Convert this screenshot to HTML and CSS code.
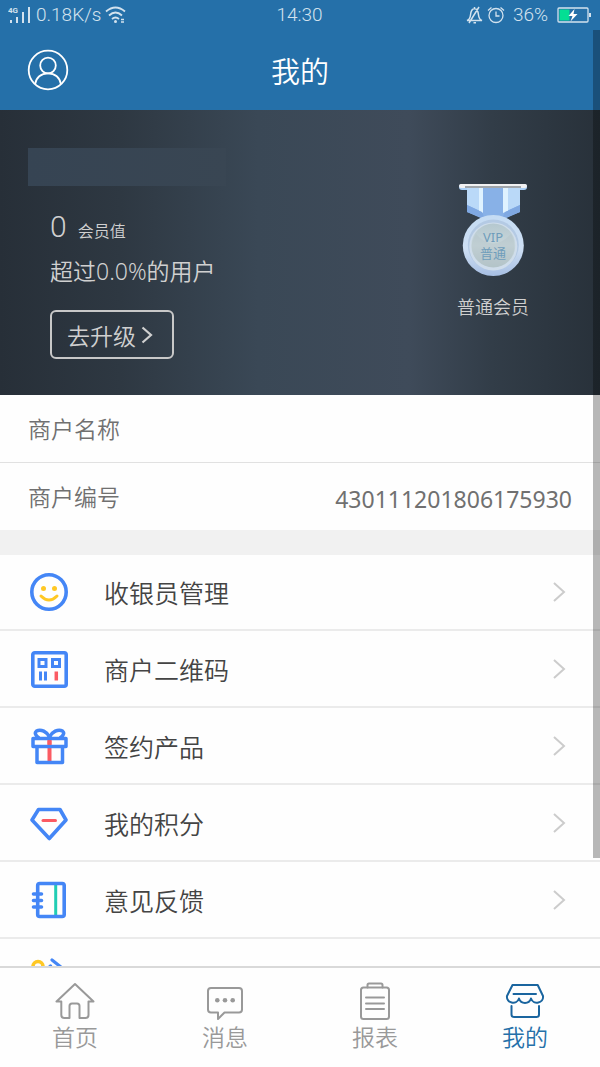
FILE: index.html
```html
<!DOCTYPE html>
<html lang="zh-CN">
<head>
<meta charset="utf-8">
<meta name="viewport" content="width=device-width, initial-scale=1">
<title>我的</title>
<link rel="stylesheet" href="styles.css">
</head>
<body>
<div class="app">
  <div class="status">
    <div class="status-side">
      <svg width="24" height="18" viewBox="0 0 24 18" fill="#d3e2ee"><text class="net" x="0" y="7">4G</text><path d="M2 14h2v3H2zM8 11h2v6H8zM14 6h2v11h-2zM20 1h2v16h-2z"/></svg>
      <span>0.18K/s</span>
      <svg width="22" height="18" viewBox="0 0 22 18" fill="none" stroke="#d3e2ee" stroke-width="1.8"><path d="M1 5.500q9.500-8 19 0M4 9.500q6.500-6 13 0M7 13q3.500-3 7 0"/><circle cx="10.500" cy="15.500" r="1.500" fill="#d3e2ee" stroke="none"/><path d="M16 13.500h3M16 16h3" stroke-width="1.500"/></svg>
    </div>
    <span>14:30</span>
    <div class="status-side status-right">
      <svg width="17" height="18" viewBox="0 0 17 18" fill="none" stroke="#d3e2ee" stroke-width="1.500"><path d="M1 14.500h15q-3-1-3.500-5.500-.5-6-4-6.500-3.500.5-4 6.500Q4 13.500 1 14.500zM8.500 2.500V1M7.500 16.800h2.500M13 1L3 17"/></svg>
      <svg width="18" height="18" viewBox="0 0 18 18" fill="none" stroke="#d3e2ee" stroke-width="1.300"><circle cx="9" cy="9.500" r="7"/><path d="M9 5.500V10h3.500M1 4.500L4.500 1.500M17 4.500L13.500 1.500"/></svg>
      <span class="percent">36%</span>
      <svg width="34" height="16" viewBox="0 0 34 16"><rect x="1" y="1" width="30" height="14" rx="1" fill="none" stroke="#d3e2ee" stroke-width="1.300"/><path d="M2.500 2.500h10v11h-10z" fill="#04df94"/><path d="M32 6h2v4h-2z" fill="#d3e2ee"/><path d="M17.500 2L11.500 9h4l-2 5.500 7-7.500h-4z" fill="#fff"/></svg>
    </div>
  </div>

  <header class="header">
    <button class="profile" type="button" aria-label="个人资料">
      <svg width="42" height="42" viewBox="0 0 42 42" fill="none" stroke="#fff" stroke-width="1.800"><circle cx="21" cy="21" r="19.300"/><circle cx="21" cy="16.500" r="7.800"/><path d="M8.200 35C9 28.500 14 24.300 21 24.300S33 28.500 33.800 35"/></svg>
    </button>
    <h1 class="title">我的</h1>
  </header>

  <main class="content">
    <section class="hero">
      <div class="member">
        <div class="name-mask"></div>
        <div class="stats">
          <p class="score"><span class="score-value">0</span><span class="score-label">会员值</span></p>
          <p class="rank">超过0.0%的用户</p>
          <button class="upgrade" type="button">去升级<svg width="12" height="20" viewBox="0 0 12 20" fill="none" stroke="#d0d0d0" stroke-width="2.200"><path d="M1.500 2.500L10 10 1.500 17.500"/></svg></button>
        </div>
      </div>
      <div class="level">
        <svg width="70" height="94" viewBox="0 0 70 94">
          <defs>
            <linearGradient id="rim" x1="0" y1="0" x2="0" y2="1"><stop offset="0" stop-color="#c5dcf4"/><stop offset=".55" stop-color="#cedff3"/><stop offset="1" stop-color="#a7bfe3"/></linearGradient>
            <linearGradient id="face" x1="0" y1="0" x2="0" y2="1"><stop offset="0" stop-color="#b5c8cf"/><stop offset=".5" stop-color="#c8d6da"/><stop offset="1" stop-color="#b3c4c8"/></linearGradient>
          </defs>
          <rect x="1" y="1" width="68" height="6" rx="3" fill="#abd1f8"/>
          <rect x="1" y="1" width="68" height="4" rx="2" fill="#f1f1f2"/>
          <path d="M7 3h56v2H7z" fill="#a0a5aa"/>
          <path d="M9 5h53v24L46 36H25L9 29z" fill="#88b1e7"/>
          <path d="M9 5h12v22.500L9 22zM62 5H50v22.500L62 22z" fill="#bad9f8"/>
          <path d="M21 5h4v25l-4-2zM45 5h5v23l-5 2z" fill="#dff2ff"/>
          <path d="M9 22l15 7 3 7L9 29zM62 22l-15 7-3 7 18-7z" fill="#7fa8e2"/>
          <circle cx="35.300" cy="62.500" r="30.500" fill="url(#rim)"/>
          <circle cx="35.300" cy="62" r="25.500" fill="#b4cae4"/>
          <circle cx="35.300" cy="63.500" r="24" fill="#cfddeb"/>
          <circle cx="35.300" cy="62.500" r="22" fill="url(#face)"/>
          <path d="M18 51Q35 70 53 51 61 65 51 77q-16 14-32 0Q9 65 18 51z" fill="#b4c4c8" opacity=".4"/>
          <text class="medal-text" x="35" y="59">VIP</text>
          <text class="medal-text" x="35" y="75">普通</text>
        </svg>
        <p class="level-name">普通会员</p>
      </div>
    </section>

    <dl class="info">
      <div class="info-row"><dt>商户名称</dt><dd></dd></div>
      <div class="info-row"><dt>商户编号</dt><dd>430111201806175930</dd></div>
    </dl>

    <nav class="menu">
      <a class="item" href="#cashier">
        <svg class="icon" viewBox="0 0 38 38" fill="none" stroke="#ffc824" stroke-width="3" stroke-linecap="round"><circle cx="19" cy="19" r="17.200" stroke="#4486f6" stroke-width="3.600"/><circle cx="13.500" cy="15.500" r="2.500" fill="#ffc824" stroke="none"/><circle cx="24.500" cy="15.500" r="2.500" fill="#ffc824" stroke="none"/><path d="M11 23q8 8 16 0"/></svg>
        <span class="label">收银员管理</span>
        <svg class="chevron" viewBox="0 0 14 22"><path d="M2 2l10 9L2 20"/></svg>
      </a>
      <a class="item" href="#qrcode">
        <svg class="icon" viewBox="0 0 38 38" fill="none" stroke="#4486f6" stroke-width="3"><rect x="2.800" y="2.800" width="33.400" height="33.400" rx="2" stroke-width="3.600"/><path d="M9 9.500h7v7H9zM22.500 9.500h7v7h-7zM10.500 21.500v9M15.500 21.500v9"/><path d="M26.300 21.500v9" stroke="#fb5b63" stroke-width="3.500"/></svg>
        <span class="label">商户二维码</span>
        <svg class="chevron" viewBox="0 0 14 22"><path d="M2 2l10 9L2 20"/></svg>
      </a>
      <a class="item" href="#products">
        <svg class="icon" viewBox="0 0 38 38" fill="none" stroke="#4486f6" stroke-width="3.500" stroke-linejoin="round"><path d="M19.500 13v22" stroke="#fb5b63" stroke-width="4"/><path d="M3 11.500h33v8H3zM7 19.500h25.500v16H7zM19.500 10C17 5 11 1.500 6.500 4 3.500 6.500 7 9.500 9 11M19.500 10C22 5 28 1.500 32.500 4 35.500 6.500 32 9.500 30 11"/><path d="M19.500 13.300v4.400" stroke="#fb5b63" stroke-width="4"/></svg>
        <span class="label">签约产品</span>
        <svg class="chevron" viewBox="0 0 14 22"><path d="M2 2l10 9L2 20"/></svg>
      </a>
      <a class="item" href="#points">
        <svg class="icon" viewBox="0 0 38 38" fill="none" stroke="#4486f6" stroke-width="3.600" stroke-linejoin="round" stroke-linecap="round"><path d="M8.500 5.500h21.500L36 16 19.300 34.500 2 16z"/><path d="M13 16.500h12.500" stroke="#fb5b63" stroke-width="3"/></svg>
        <span class="label">我的积分</span>
        <svg class="chevron" viewBox="0 0 14 22"><path d="M2 2l10 9L2 20"/></svg>
      </a>
      <a class="item" href="#feedback">
        <svg class="icon" viewBox="0 0 38 38" fill="none" stroke="#4486f6" stroke-width="3.600" stroke-linecap="round"><path d="M25.700 4v30" stroke="#21cdb4" stroke-width="3" stroke-linecap="butt"/><rect x="7.700" y="2.500" width="26.500" height="33" rx="2"/><path d="M3.500 13h8M3.500 19.500h8M3.500 26h8"/></svg>
        <span class="label">意见反馈</span>
        <svg class="chevron" viewBox="0 0 14 22"><path d="M2 2l10 9L2 20"/></svg>
      </a>
      <a class="item" href="#settings" aria-label="设置">
        <svg class="icon" viewBox="0 0 38 38" fill="none" stroke="#4486f6" stroke-width="3.200" stroke-linecap="round"><circle cx="8" cy="8.500" r="5" stroke="#ffc824" stroke-width="3.600"/><path d="M22 2l12 9.500L22 23M19.500 9l1-1"/></svg>
      </a>
    </nav>
  </main>

  <nav class="tabs">
    <a class="tab" href="#home">
      <svg width="40" height="40" viewBox="0 0 40 40"><path d="M20 3L1.500 20.500h4.800V34q0 3 3 3h5.200V25q0-2.500 2.500-2.500h5q2.500 0 2.500 2.500v12h6q3 0 3-3V20.500h5z"/></svg>
      首页
    </a>
    <a class="tab" href="#messages">
      <svg width="40" height="40" viewBox="0 0 40 40"><path d="M6 7h28q3 0 3 3V28.500q0 3-3 3H19.500l-6.500 6.500V31.500H6q-3 0-3-3V10q0-3 3-3z"/><g fill="#999" stroke="none"><circle cx="12.300" cy="19.200" r="2.300"/><circle cx="20" cy="19.200" r="2.300"/><circle cx="27.700" cy="19.200" r="2.300"/></g></svg>
      消息
    </a>
    <a class="tab" href="#reports">
      <svg width="40" height="40" viewBox="0 0 40 40"><rect x="6" y="6.500" width="28" height="31.500" rx="2.500"/><path d="M12.500 6.500V4q0-1.500 1.500-1.500h12q1.500 0 1.500 1.500v2.500M11 16.500h18M11 22.500h18M11 28h18"/></svg>
      报表
    </a>
    <a class="tab active" href="#mine" aria-current="page">
      <svg width="40" height="40" viewBox="0 0 40 40"><path d="M7.500 4h25.200L38 15c1 7-9.500 9.500-12 2.500-2 6-10 6-12 0C11.500 24.500 1 22 2 15zM6.500 25V33.500q0 2.500 2.500 2.500h22.500q2.500 0 2.500-2.500v-8.500M8.500 13H31"/></svg>
      我的
    </a>
  </nav>
  <div class="scrollbar"></div>
</div>
</body>
</html>
```
FILE: styles.css
```css
* { box-sizing: border-box; }
body, h1, p, dl, dd { margin: 0; }
body {
  font-family: Roboto, "Noto Sans CJK SC", sans-serif;
  font-weight: 350;
  color: #444;
  background: #fefefe;
}
a { color: inherit; text-decoration: none; }
button { font: inherit; color: inherit; background: none; border: 0; padding: 0; }
svg { display: block; flex: none; }

.app {
  position: relative;
  display: flex;
  flex-direction: column;
  height: 100vh;
  overflow: hidden;
}

.status {
  display: flex;
  align-items: center;
  height: 30px;
  padding: 0 9px 0 8px;
  background: #2570a9;
  color: #d3e2ee;
  font-size: 19px;
  line-height: 34px;
}
.status-side { display: flex; flex: 1; align-items: center; gap: 4px; }
.status-right { justify-content: flex-end; }
.percent { padding: 0 5px 0 4px; }
.net { font-size: 8px; font-weight: 700; }

.header {
  display: grid;
  grid-template-columns: 1fr auto 1fr;
  align-items: center;
  height: 80px;
  padding: 0 27px;
  background: #2570a9;
  color: #fff;
}
.title { padding-top: 6px; font-size: 29px; font-weight: 350; line-height: 44px; }

.content { flex: 1; min-height: 0; overflow: hidden; }

.hero {
  display: flex;
  justify-content: space-between;
  height: 285px;
  padding: 38px 71px 36px 28px;
  background: linear-gradient(90deg, #272f38 0%, #2e3842 20%, #3a4856 43%, #3f4b5a 68%, #323d48 82%, #28313a 100%);
  color: #d0d0d0;
}
.name-mask {
  width: 198px;
  height: 38px;
  background: linear-gradient(90deg, #364453, #394653);
}
.stats { padding: 22px 0 0 22px; }
.score { display: flex; align-items: baseline; gap: 11px; line-height: 38px; }
.score-value { font-size: 30px; }
.score-label { font-size: 16px; }
.rank { font-family: "Noto Sans", "Noto Sans CJK SC", sans-serif; font-size: 23px; line-height: 40px; }
.upgrade {
  display: flex;
  align-items: center;
  gap: 5px;
  height: 49px;
  margin-top: 19px;
  padding: 0 19px 0 15px;
  border: 2px solid #c8c8c8;
  border-radius: 6px;
  font-size: 23px;
}
.level { display: flex; flex-direction: column; align-items: center; padding-top: 35px; }
.medal-text { font-family: "Noto Sans", "Noto Sans CJK SC", sans-serif; font-size: 13px; font-weight: 400; fill: #6f9dbb; text-anchor: middle; }
.level-name { margin-top: 16px; font-size: 18px; line-height: 30px; }

.info { border-bottom: 25px solid #f1f1f1; color: #707070; }
.info-row {
  display: flex;
  align-items: center;
  justify-content: space-between;
  height: 67px;
  padding: 4px 28px 0;
  font-size: 23px;
  line-height: 36px;
}
.info-row:first-child { height: 68px; border-bottom: 1px solid #e1e1e1; }
.info dd { font-family: "Noto Sans", sans-serif; font-weight: 400; }

.item {
  display: flex;
  align-items: center;
  height: 77px;
  padding: 0 34px 0 30px;
  border-bottom: 2px solid #ebebeb;
}
.item:first-child { height: 76px; }
.icon { width: 38px; height: 38px; }
.label { flex: 1; margin-left: 36px; padding-top: 6px; font-size: 25px; line-height: 36px; }
.chevron { width: 14px; height: 22px; fill: none; stroke: #ccc; stroke-width: 2; }

.tabs {
  display: flex;
  height: 101px;
  border-top: 2px solid #d9d9d9;
  background: #fefefe;
}
.tab {
  display: flex;
  flex: 1;
  flex-direction: column;
  align-items: center;
  padding-top: 13px;
  color: #999;
  font-size: 23px;
  line-height: 36px;
}
.tab svg { fill: none; stroke: #999; stroke-width: 2; stroke-linejoin: round; stroke-linecap: round; }
.tab.active { color: #2570a9; }
.tab.active svg { stroke: #1a659f; }

.scrollbar {
  position: absolute;
  top: 30px;
  right: 0;
  width: 7px;
  height: 828px;
  background: rgba(0, 0, 0, 0.28);
}
```
